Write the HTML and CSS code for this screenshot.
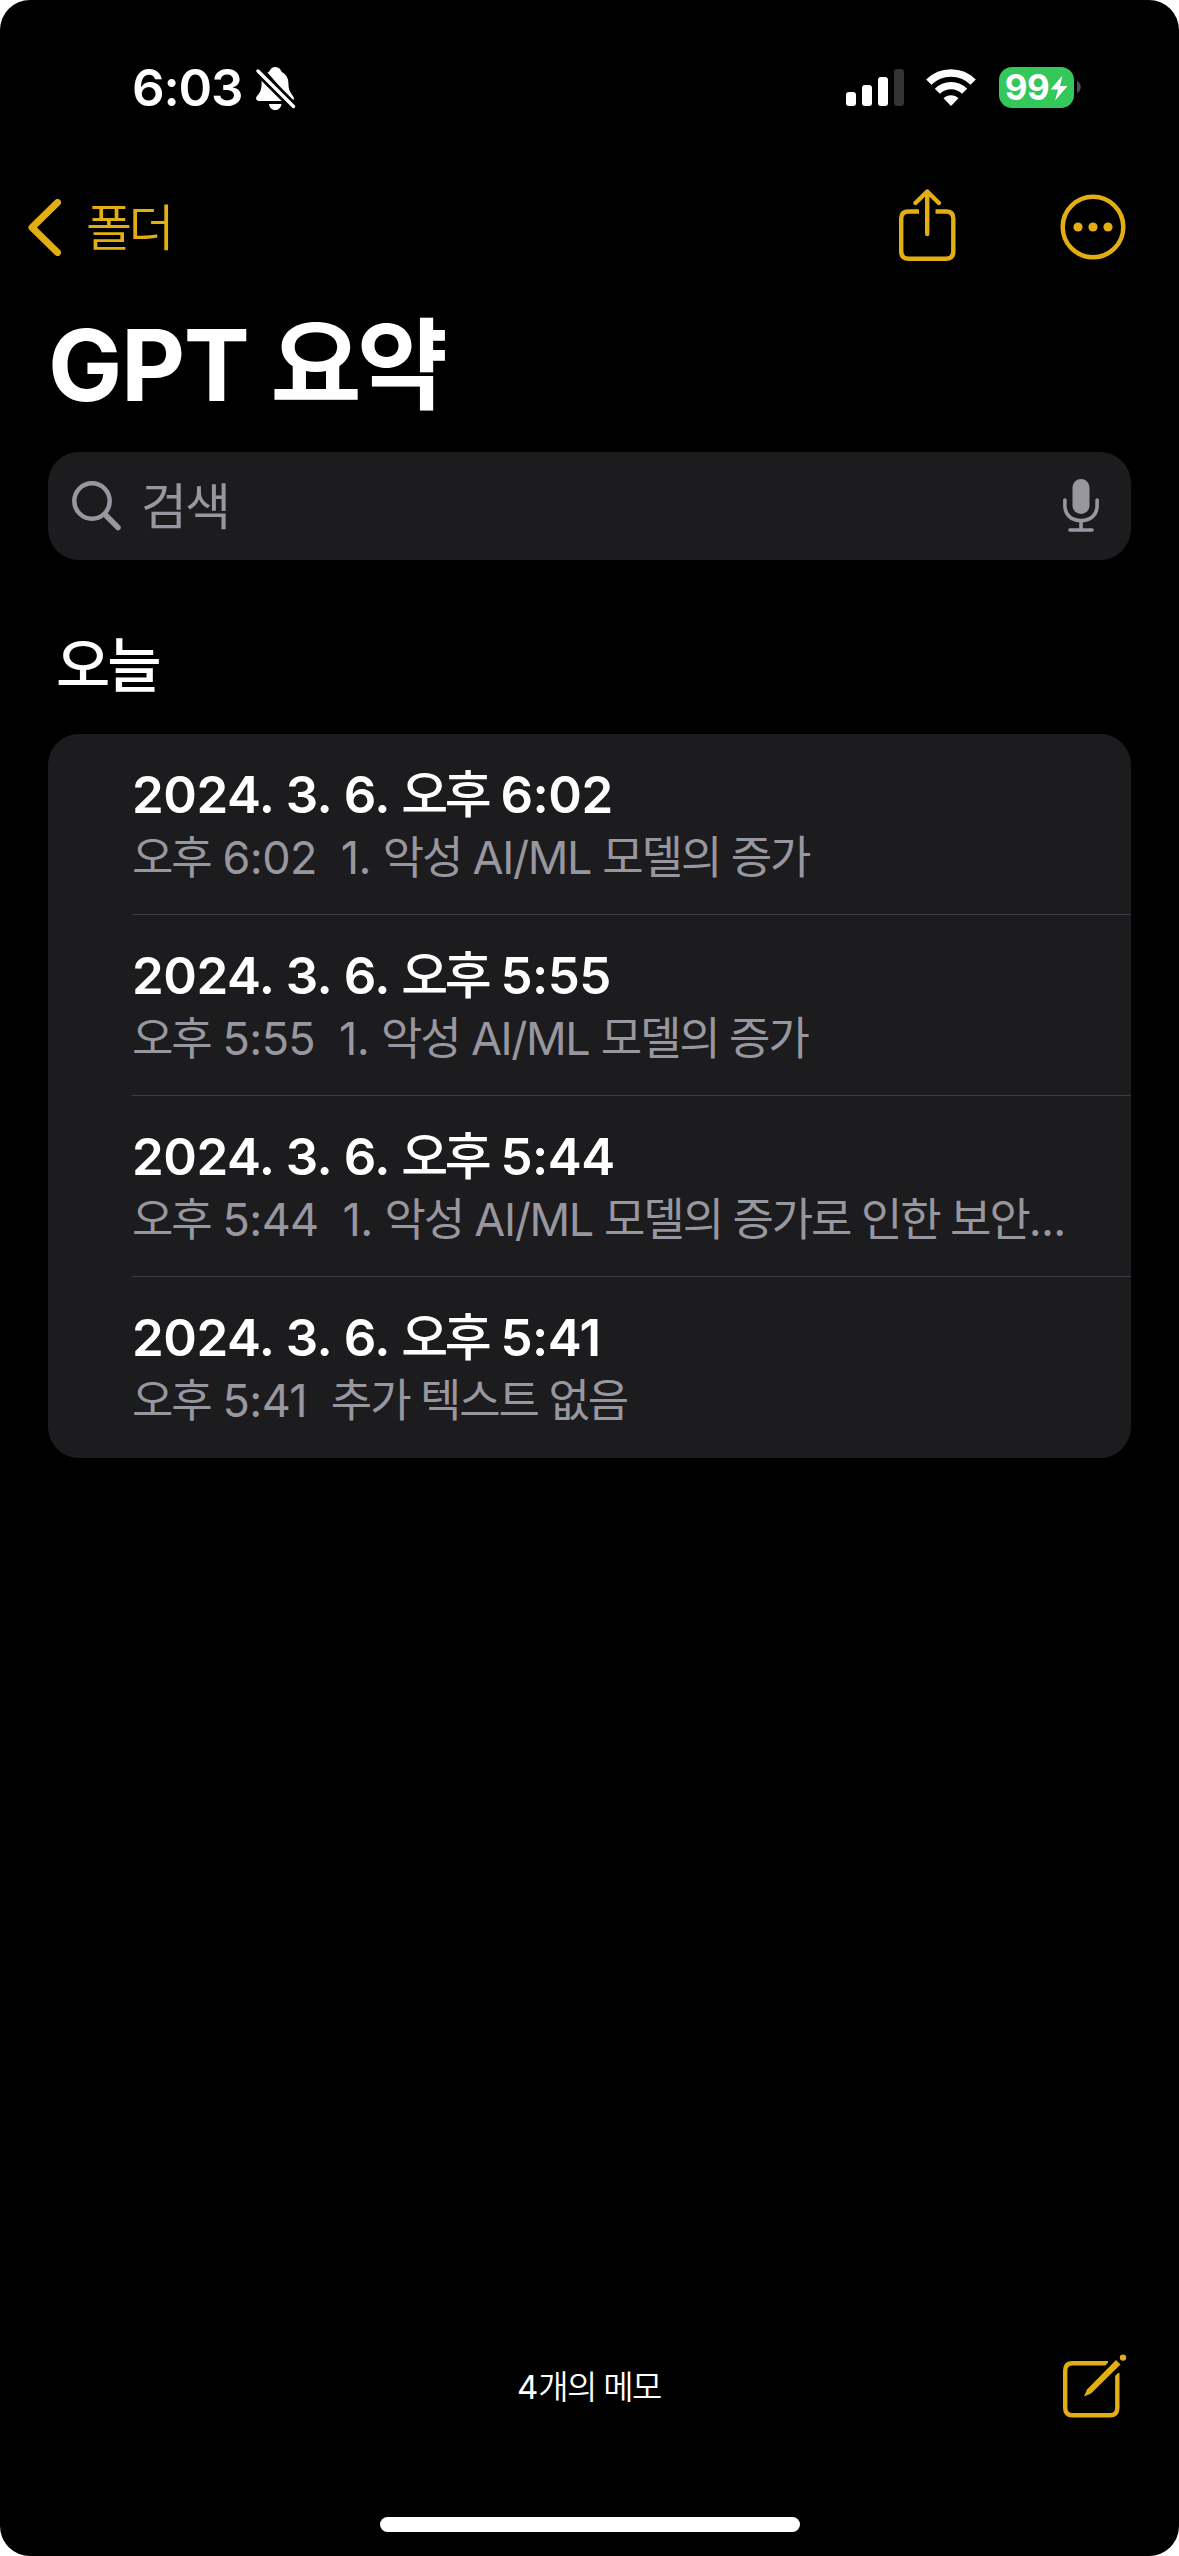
FILE: index.html
```
<!DOCTYPE html>
<html lang="ko">
<head>
  <meta charset="UTF-8">
  <title>GPT 요약</title>
  <link rel="stylesheet" href="styles.css">
</head>
<body>
  <div class="phone">
    <div class="status-bar">
      <div class="status-left">
        <span class="time">6:03</span>
        <svg class="bell" width="40" height="43" viewBox="0 0 40 43">
          <path fill="#fff" d="M11.500 5.500C14 5.500 14 0 19.200 0S24.500 4 26.500 5.500C31 8 32.500 12 32.500 18C32.500 26 38 28 38 32L36 34Z"/>
          <path fill="#fff" d="M5.500 12L28 34H3C0 34-.8 31 1 29C5 25 6 21 5.500 12Z"/>
          <path fill="#fff" d="M13 37H25.500C25 41 22 43 19.200 43S13.500 41 13 37Z"/>
          <path stroke="#000" stroke-width="9" d="M2 4L38 40"/>
          <path stroke="#fff" stroke-width="3.400" stroke-linecap="round" d="M2 4L37.500 39.500"/>
        </svg>
      </div>
      <div class="status-right">
        <svg class="signal" width="58" height="37" viewBox="0 0 58 37">
          <rect x="0" y="23" width="10" height="14" rx="3" fill="#fff"/>
          <rect x="16" y="16" width="10" height="21" rx="3" fill="#fff"/>
          <rect x="32" y="8" width="10" height="29" rx="3" fill="#fff"/>
          <rect x="48" y="0" width="10" height="37" rx="3" fill="#333"/>
        </svg>
        <svg class="wifi" width="50" height="37" viewBox="0 0 50 37">
          <path fill="none" stroke="#fff" stroke-width="7.500" d="M2.800 13.200A31.500 31.500 0 0 1 47.200 13.200"/>
          <path fill="none" stroke="#fff" stroke-width="7.200" d="M11.400 22.300A19 19 0 0 1 38.600 22.300"/>
          <path fill="#fff" d="M25 37L17.500 29.300A10.600 10.600 0 0 1 32.500 29.300Z"/>
        </svg>
        <div class="battery">
          <span>99</span>
          <svg width="18" height="26" viewBox="0 0 18 26"><path fill="#fff" d="M12.500 .5L.5 14.500H8L5 25.500L17.500 11H10Z"/></svg>
        </div>
        <svg class="battery-cap" width="4" height="12" viewBox="0 0 4 12"><path fill="#4d4d4d" d="M0 0C5 2 5 10 0 12Z"/></svg>
      </div>
    </div>

    <div class="nav">
      <svg width="33" height="57" viewBox="0 0 33 57"><path fill="none" stroke="#e2ae12" stroke-width="7" stroke-linecap="round" stroke-linejoin="round" d="M29.500 3.500L4 28.500L29.500 53.500"/></svg>
      <span class="back">폴더</span>
      <svg class="share" width="57" height="73" viewBox="0 0 57 73">
        <g fill="none" stroke="#e2ae12" stroke-width="4.400">
          <path d="M20 22.500H9.500Q2.200 22.500 2.200 29.500V62.500Q2.200 69.700 9.500 69.700H47Q54.300 69.700 54.300 62.500V29.500Q54.300 22.500 47 22.500H36.500"/>
          <path stroke-linecap="round" stroke-linejoin="round" d="M28.200 45V2.500M16.500 14L28.200 2.500L39.900 14"/>
        </g>
      </svg>
      <svg class="more" width="66" height="66" viewBox="0 0 66 66">
        <circle cx="33" cy="33" r="30.300" fill="none" stroke="#e2ae12" stroke-width="4.500"/>
        <g fill="#e2ae12"><circle cx="18" cy="33" r="4.600"/><circle cx="33" cy="33" r="4.600"/><circle cx="48" cy="33" r="4.600"/></g>
      </svg>
    </div>

    <h1>GPT <span>요약</span></h1>

    <div class="search">
      <svg width="50" height="50" viewBox="0 0 50 50"><g fill="none" stroke="#98979f" stroke-width="4.500"><circle cx="20" cy="20" r="17.700"/><path stroke-width="5.500" stroke-linecap="round" d="M33 33.500L46 46.500"/></g></svg>
      <span>검색</span>
      <svg class="mic" width="36" height="54" viewBox="0 0 36 54">
        <rect x="9.500" y="0" width="17" height="35" rx="8.500" fill="#98979f"/>
        <path fill="none" stroke="#98979f" stroke-width="3.600" stroke-linecap="round" d="M1.900 21V26.500C1.900 36 8.500 41.500 18 41.500S34.100 36 34.100 26.500V21M18 41.500V51M7 51H29"/>
      </svg>
    </div>

    <h2>오늘</h2>

    <div class="list">
      <div class="note">
        <div class="note-title">2024. 3. 6. <span>오후</span> 6:02</div>
        <div class="note-sub"><b>오후</b> 6:02&nbsp; 1. <b>악성</b><i> AI/ML </i><b>모델의 증가</b></div>
      </div>
      <div class="note">
        <div class="note-title">2024. 3. 6. <span>오후</span> 5:55</div>
        <div class="note-sub"><b>오후</b> 5:55&nbsp; 1. <b>악성</b><i> AI/ML </i><b>모델의 증가</b></div>
      </div>
      <div class="note">
        <div class="note-title">2024. 3. 6. <span>오후</span> 5:44</div>
        <div class="note-sub"><b>오후</b> 5:44&nbsp; 1. <b>악성</b><i> AI/ML </i><b>모델의 증가로 인한 보안</b>...</div>
      </div>
      <div class="note">
        <div class="note-title">2024. 3. 6. <span>오후</span> 5:41</div>
        <div class="note-sub"><b>오후</b> 5:41&nbsp; <b>추가 텍스트 없음</b></div>
      </div>
    </div>

    <div class="toolbar">
      <span class="count">4<b>개의 메모</b></span>
      <svg class="compose" width="64" height="64" viewBox="0 0 64 64">
        <path fill="none" stroke="#e2ae12" stroke-width="4.400" d="M45 9.300H9.500Q2.200 9.300 2.200 16.500V54Q2.200 61.300 9.500 61.300H47Q54.300 61.300 54.300 54V19"/>
        <path fill="#000" d="M50 3L61 13L52 22L42 12Z"/>
        <path fill="#e2ae12" d="M53 6L57.500 10.500L28 39.500L21 42.500L24 35.500Z"/>
        <circle cx="60" cy="3.600" r="3.200" fill="#e2ae12"/>
      </svg>
    </div>
    <div class="home-bar"></div>
  </div>
</body>
</html>
```
FILE: styles.css
```
html, body {
  margin: 0;
  padding: 0;
  background-color: #fff;
}
body {
  font-family: Inter, "Noto Sans CJK KR", sans-serif;
  color: #fff;
}
svg {
  display: block;
  flex: none;
}
.phone {
  width: 1179px;
  height: 2556px;
  box-sizing: border-box;
  background-color: #000;
  border-radius: 30px;
  display: flex;
  flex-direction: column;
  overflow: hidden;
  white-space: nowrap;
}
.status-bar {
  height: 176px;
  box-sizing: border-box;
  padding: 67px 98px 0 132px;
  display: flex;
  justify-content: space-between;
  align-items: flex-start;
}
.status-left, .status-right {
  display: flex;
  align-items: flex-start;
}
.time {
  width: 124px;
  font-size: 51px;
  line-height: 42px;
  font-weight: 600;
  letter-spacing: -1.2px;
}
.signal {
  margin-top: 2px;
}
.wifi {
  margin: 2px 23px 0 22px;
}
.battery {
  width: 75px;
  height: 41px;
  border-radius: 13px;
  background-color: #34c759;
  display: flex;
  align-items: center;
  justify-content: center;
  font-size: 35px;
  font-weight: 700;
  line-height: 41px;
  letter-spacing: -0.5px;
  gap: 1px;
}
.battery-cap {
  margin: 14px 0 0 3px;
}
.nav {
  height: 102px;
  padding: 0 53px 0 28px;
  display: flex;
  align-items: center;
  color: #e2ae12;
}
.back {
  margin: 0 0 6px 25px;
  font-size: 50px;
  font-weight: 350;
  letter-spacing: -3.5px;
}
.share {
  margin-left: auto;
  margin-bottom: 4px;
}
.more {
  margin-left: 104px;
}
h1 {
  margin: 0 0 0 48px;
  height: 174px;
  font-size: 99px;
  line-height: 174px;
  font-weight: 700;
  letter-spacing: -1.4px;
}
h1 span {
  letter-spacing: -4.5px;
}
.search {
  margin: 0 48px;
  height: 108px;
  box-sizing: border-box;
  padding: 0 32px 0 24px;
  border-radius: 31px;
  background-color: #1c1c1e;
  color: #98979f;
  display: flex;
  align-items: center;
  font-size: 50px;
}
.search span {
  margin: 0 0 6px 19px;
  letter-spacing: -2px;
}
.mic {
  margin-left: auto;
}
h2 {
  margin: 0 0 0 56px;
  height: 174px;
  font-size: 59px;
  line-height: 212px;
  font-weight: 500;
  letter-spacing: -3px;
}
.list {
  margin: 0 48px;
  border-radius: 31px;
  background-color: #1c1c1e;
}
.note {
  margin-left: 84px;
  height: 181px;
  box-sizing: border-box;
  padding-top: 29px;
  border-bottom: 1px solid #3d3d41;
}
.note:last-child {
  border-bottom: 0;
}
.note-title {
  font-size: 51px;
  line-height: 64px;
  font-weight: 600;
  letter-spacing: -0.5px;
}
.note-title span {
  font-weight: 500;
  letter-spacing: -3.5px;
}
.note-sub {
  font-size: 45px;
  line-height: 62px;
  letter-spacing: -0.65px;
  color: #98979f;
}
.note-sub i {
  font-style: normal;
  letter-spacing: -1.4px;
}
b {
  font-weight: 400;
  letter-spacing: -2.1px;
}
.toolbar {
  margin-top: auto;
  height: 80px;
  padding: 0 52px 0 517px;
  display: flex;
  align-items: center;
  justify-content: space-between;
}
.count {
  margin-bottom: 4px;
  font-size: 33px;
}
.count b {
  font-weight: 350;
  letter-spacing: -1.7px;
}
.compose {
  margin-bottom: 3px;
}
.home-bar {
  width: 420px;
  height: 15px;
  margin: 90px auto 24px;
  border-radius: 8px;
  background-color: #fff;
}
```
